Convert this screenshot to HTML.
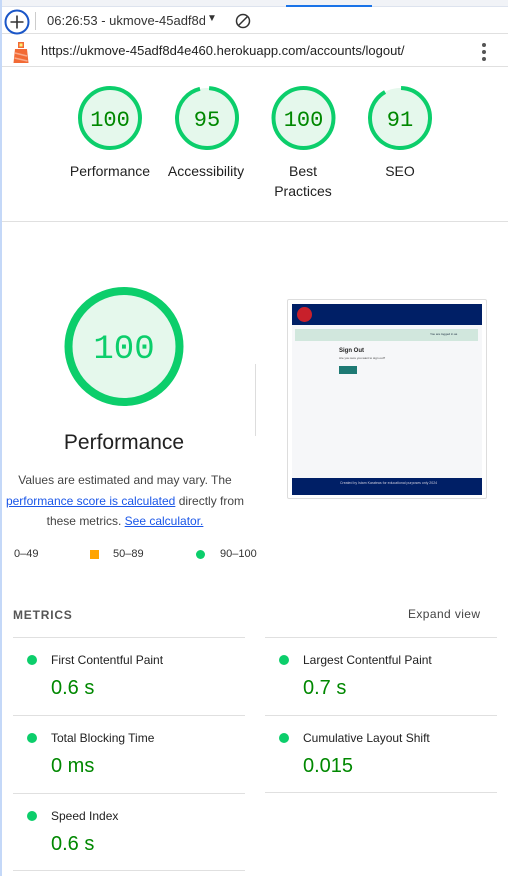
<!DOCTYPE html>
<html><head><meta charset="utf-8"><style>
*{margin:0;padding:0;box-sizing:border-box}
body{width:508px;height:876px;overflow:hidden;background:#fff;font-family:"Liberation Sans",Arial,sans-serif;position:relative;color:#212121}
.a{position:absolute}
.strip{left:0;top:0;width:2px;height:876px;background:#c4d8f8}
.tab{left:0;top:0;width:508px;height:7px;background:#f1f3f7;border-bottom:1px solid #dde3ee}
.tabline{left:286px;top:5px;width:86px;height:2px;background:#1a73e8}
.bar1{left:0;top:7px;width:508px;height:27px;border-bottom:1px solid #e0e0e0}
.bar2{left:0;top:34px;width:508px;height:33px;border-bottom:1px solid #e0e0e0}
.sep{background:#e0e0e0;height:1px}
.lbl{font-size:14px;color:#212121;text-align:center;width:100px;line-height:20px}
.mono{font-family:"Liberation Mono","DejaVu Sans Mono",monospace;color:#008800}
.mlabel{font-size:12px;color:#212121}
.mval{font-size:20px;color:#008800}
.dot{width:10px;height:10px;border-radius:50%;background:#0cce6b}
</style></head><body>
<div class="a tab"></div><div class="a tabline"></div>
<div class="a bar1"></div>
<svg class="a" style="left:4px;top:9px" width="26" height="26" viewBox="0 0 26 26"><circle cx="13" cy="13" r="11.5" fill="none" stroke="#1a56c8" stroke-width="2"/><path d="M13 6.5v13M6.5 13h13" stroke="#333" stroke-width="1.6"/></svg>
<div class="a" style="left:35px;top:12px;width:1px;height:18px;background:#ccc"></div>
<div class="a" style="left:47px;top:13px;font-size:13px;color:#333;width:158px;overflow:hidden;white-space:nowrap">06:26:53 - ukmove-45adf8d4e460</div>
<div class="a" style="left:207px;top:13px;font-size:10px;color:#333">▼</div>
<svg class="a" style="left:235px;top:13px" width="16" height="16"><circle cx="8" cy="8" r="6.5" fill="none" stroke="#333" stroke-width="1.5"/><path d="M3.5 12.5L12.5 3.5" stroke="#333" stroke-width="1.5"/></svg>
<div class="a bar2"></div>
<svg class="a" style="left:12px;top:40px" width="18" height="24" viewBox="0 0 18 24"><rect x="6" y="2" width="6" height="6" fill="#f26a35"/><rect x="7.5" y="3.5" width="3" height="3" fill="#fff176"/><path d="M3 9h12l1.5 14H1.5z" fill="#f26a35"/><path d="M3 13l12 3M2.5 18l13 3" stroke="#f9a98a" stroke-width="1.5"/></svg>
<div class="a" style="left:41px;top:43px;font-size:13px;color:#222">https://ukmove-45adf8d4e460.herokuapp.com/accounts/logout/</div>
<svg class="a" style="left:480px;top:42px" width="8" height="20"><circle cx="4" cy="3" r="2" fill="#555"/><circle cx="4" cy="10" r="2" fill="#555"/><circle cx="4" cy="17" r="2" fill="#555"/></svg>
<div class="a strip"></div>

<!-- small gauges -->
<svg class="a" style="left:0;top:80px" width="508" height="80">
<g fill="#e5f8ec" stroke="#0cce6b" stroke-width="4">
<circle cx="110" cy="38" r="30"/>
<circle cx="400" cy="38" r="30" fill="#e5f8ec" stroke="none"/>
<circle cx="303.5" cy="38" r="30"/>
<circle cx="207" cy="38" r="30" stroke="none"/>
</g>
<circle cx="207" cy="38" r="30" fill="none" stroke="#0cce6b" stroke-width="4" stroke-dasharray="179 200" transform="rotate(-86 207 38)"/>
<circle cx="400" cy="38" r="30" fill="none" stroke="#0cce6b" stroke-width="4" stroke-dasharray="171.5 200" transform="rotate(-88 400 38)"/>
<g font-family="Liberation Mono,monospace" font-size="22" fill="#008800" text-anchor="middle">
<text x="110" y="46">100</text><text x="207" y="46">95</text><text x="303.5" y="46">100</text><text x="400" y="46">91</text></g>
</svg>
<div class="a lbl" style="left:60px;top:161px">Performance</div>
<div class="a lbl" style="left:156px;top:161px">Accessibility</div>
<div class="a lbl" style="left:253px;top:161px">Best<br>Practices</div>
<div class="a lbl" style="left:350px;top:161px">SEO</div>
<div class="a sep" style="left:2px;top:221px;width:506px"></div>

<!-- big gauge -->
<svg class="a" style="left:60px;top:283px" width="128" height="128"><circle cx="64" cy="63.5" r="55.5" fill="#e5f8ec" stroke="#0cce6b" stroke-width="8"/><text x="64" y="75" text-anchor="middle" font-family="Liberation Mono,monospace" font-size="34" fill="#0cce6b">100</text></svg>
<div class="a" style="left:24px;top:431px;width:200px;text-align:center;font-size:21px;color:#212121">Performance</div>
<div class="a" style="left:0;top:470px;width:250px;text-align:center;font-size:12px;line-height:20.5px;color:#444">Values are estimated and may vary. The<br><span style="color:#1a56e8;text-decoration:underline">performance score is calculated</span> directly from<br>these metrics. <span style="color:#1a56e8;text-decoration:underline">See calculator.</span></div>
<div class="a" style="left:255px;top:364px;width:1px;height:72px;background:#ddd"></div>

<!-- screenshot thumb -->
<div class="a" style="left:287px;top:299px;width:200px;height:200px;border:1px solid #ddd;border-radius:2px;background:#fff"></div>
<div class="a" style="left:292px;top:304px;width:190px;height:191px;background:#f6f7f9"></div>
<div class="a" style="left:292px;top:304px;width:190px;height:21px;background:#001f66"></div>
<div class="a" style="left:297px;top:307px;width:15px;height:15px;border-radius:50%;background:#c8202b"></div>
<div class="a" style="left:295px;top:329px;width:183px;height:12px;background:#d1e7dd"></div>
<div class="a" style="left:430px;top:332px;font-size:3px;color:#234">You are logged in as</div>
<div class="a" style="left:339px;top:348px;font-size:6px;color:#222;font-weight:bold">Sign Out</div>
<div class="a" style="left:339px;top:356px;font-size:3px;color:#444">Are you sure you want to sign out?</div>
<div class="a" style="left:339px;top:366px;width:18px;height:8px;background:#1e7a74"></div>
<div class="a" style="left:292px;top:478px;width:190px;height:17px;background:#001f66"></div>
<div class="a" style="left:340px;top:481px;font-size:3.5px;color:#ccd">Created by Istam Karateas for educational purposes only 2024</div>

<!-- legend -->
<div class="a" style="left:14px;top:548px;font-size:11px;color:#333">0–49</div>
<div class="a" style="left:90px;top:550px;width:9px;height:9px;background:#ffa400"></div>
<div class="a" style="left:113px;top:548px;font-size:11px;color:#333">50–89</div>
<div class="a dot" style="left:196px;top:550px;width:9px;height:9px"></div>
<div class="a" style="left:220px;top:548px;font-size:11px;color:#333">90–100</div>

<div class="a" style="left:13px;top:608px;font-size:12px;letter-spacing:.8px;color:#555;font-weight:bold">METRICS</div>
<div class="a" style="left:408px;top:607px;font-size:12px;letter-spacing:.4px;color:#444">Expand view</div>
<div class="a sep" style="left:13px;top:637px;width:232px"></div>
<div class="a sep" style="left:265px;top:637px;width:232px"></div>

<div class="a dot" style="left:27px;top:655px"></div>
<div class="a mlabel" style="left:51px;top:653px">First Contentful Paint</div>
<div class="a mval" style="left:51px;top:677px">0.6 s</div>
<div class="a dot" style="left:279px;top:655px"></div>
<div class="a mlabel" style="left:303px;top:653px">Largest Contentful Paint</div>
<div class="a mval" style="left:303px;top:677px">0.7 s</div>
<div class="a sep" style="left:13px;top:715px;width:232px"></div>
<div class="a sep" style="left:265px;top:715px;width:232px"></div>

<div class="a dot" style="left:27px;top:733px"></div>
<div class="a mlabel" style="left:51px;top:731px">Total Blocking Time</div>
<div class="a mval" style="left:51px;top:755px">0 ms</div>
<div class="a dot" style="left:279px;top:733px"></div>
<div class="a mlabel" style="left:303px;top:731px">Cumulative Layout Shift</div>
<div class="a mval" style="left:303px;top:755px">0.015</div>
<div class="a sep" style="left:13px;top:793px;width:232px"></div>
<div class="a sep" style="left:265px;top:792px;width:232px"></div>

<div class="a dot" style="left:27px;top:811px"></div>
<div class="a mlabel" style="left:51px;top:809px">Speed Index</div>
<div class="a mval" style="left:51px;top:833px">0.6 s</div>
<div class="a sep" style="left:13px;top:870px;width:232px"></div>
</body></html>
